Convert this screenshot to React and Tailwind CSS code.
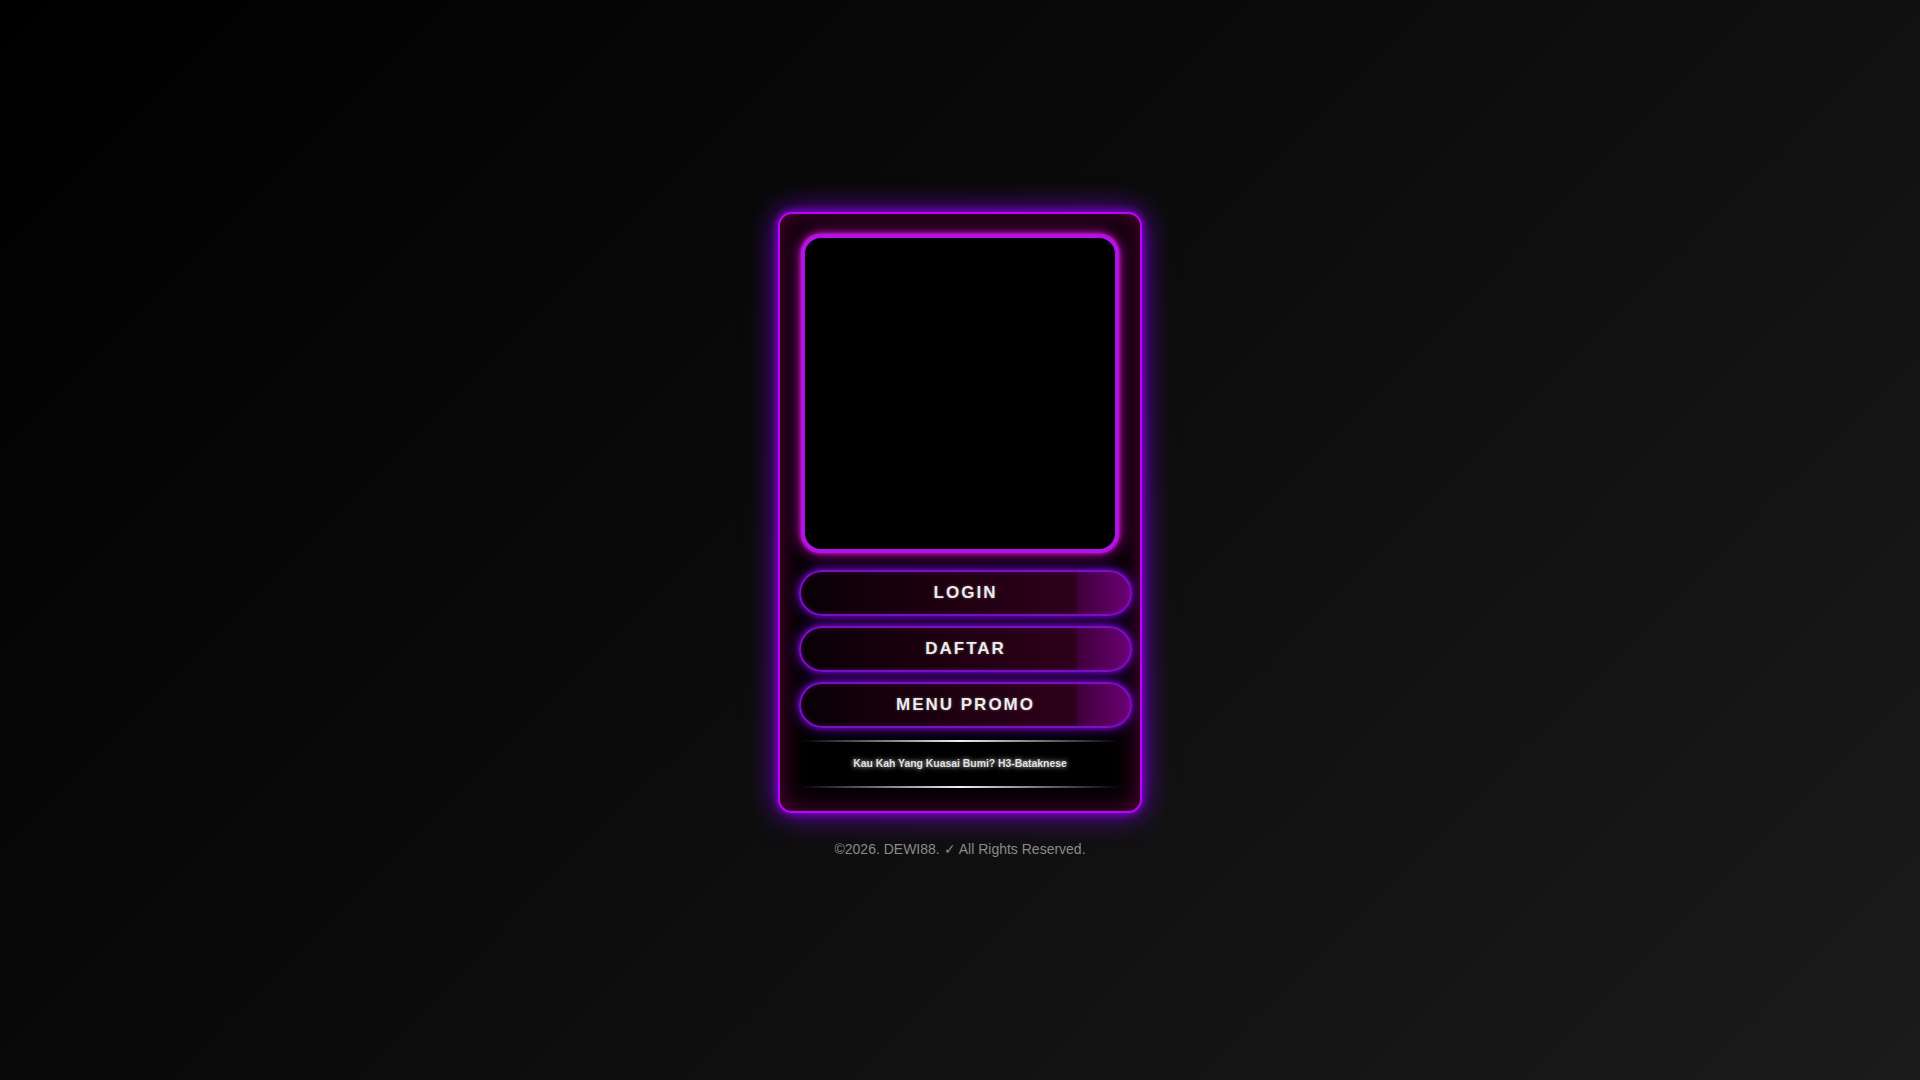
const buttons = ['LOGIN', 'DAFTAR', 'MENU PROMO'];

const NeonButton = ({ label }) => (
  <button
    className="flex h-[46px] w-[333px] items-center justify-center rounded-full border-2 border-[#7a10c0] bg-[linear-gradient(90deg,#0a0006_0%,#1c000e_40%,#2e001b_84%,#3e0038_84%,#6a0074_100%)] text-[17px] font-bold tracking-[2px] text-[#ececec] shadow-[0_0_14px_#6400b8,0_0_4px_#8800d8,inset_0_0_5px_rgba(150,0,230,0.3)] [text-shadow:0_0_3px_rgba(255,255,255,0.3)]"
  >
    {label}
  </button>
);

const Divider = () => (
  <div className="h-[2px] w-[318px] bg-[linear-gradient(90deg,transparent,#8e8e8e_30%,#f0f0f0_50%,#8e8e8e_70%,transparent)]" />
);

export default function App() {
  return (
    <div className="flex min-h-screen flex-col items-center justify-center bg-[linear-gradient(135deg,#000000_0%,#0b0b0b_45%,#1b1b1b_100%)] font-['Liberation_Sans',Arial,sans-serif]">
      {/* Card */}
      <div className="flex h-[601px] w-[364px] flex-col items-center rounded-[14px] border-2 border-[#c000ff] bg-black pt-[20px] shadow-[0_0_30px_#7800d8,0_0_8px_#a800ff,inset_0_0_28px_rgba(210,0,130,0.42)]">
        {/* Image box */}
        <div className="h-[319px] w-[318px] rounded-[20px] border-4 border-[#b410ec] bg-black shadow-[0_0_16px_#c800c0,0_0_4px_#ff40ff]" />

        {/* Buttons */}
        <div className="mt-[17px] ml-[11px] flex flex-col gap-[10px]">
          {buttons.map((b) => (
            <NeonButton key={b} label={b} />
          ))}
        </div>

        <div className="mt-[12px]">
          <Divider />
        </div>
        <p className="mt-[15px] text-[10.4px] font-bold leading-[14px] text-[#e2e2e2] [text-shadow:0_0_5px_rgba(255,255,255,0.8)]">
          Kau Kah Yang Kuasai Bumi? H3-Bataknese
        </p>
        <div className="mt-[15px]">
          <Divider />
        </div>
      </div>

      {/* Footer */}
      <p className="mt-[26px] mb-[9px] text-[14px] leading-[20px] text-[#8a8a8a]">
        ©2026. DEWI88. ✓ All Rights Reserved.
      </p>
    </div>
  );
}
